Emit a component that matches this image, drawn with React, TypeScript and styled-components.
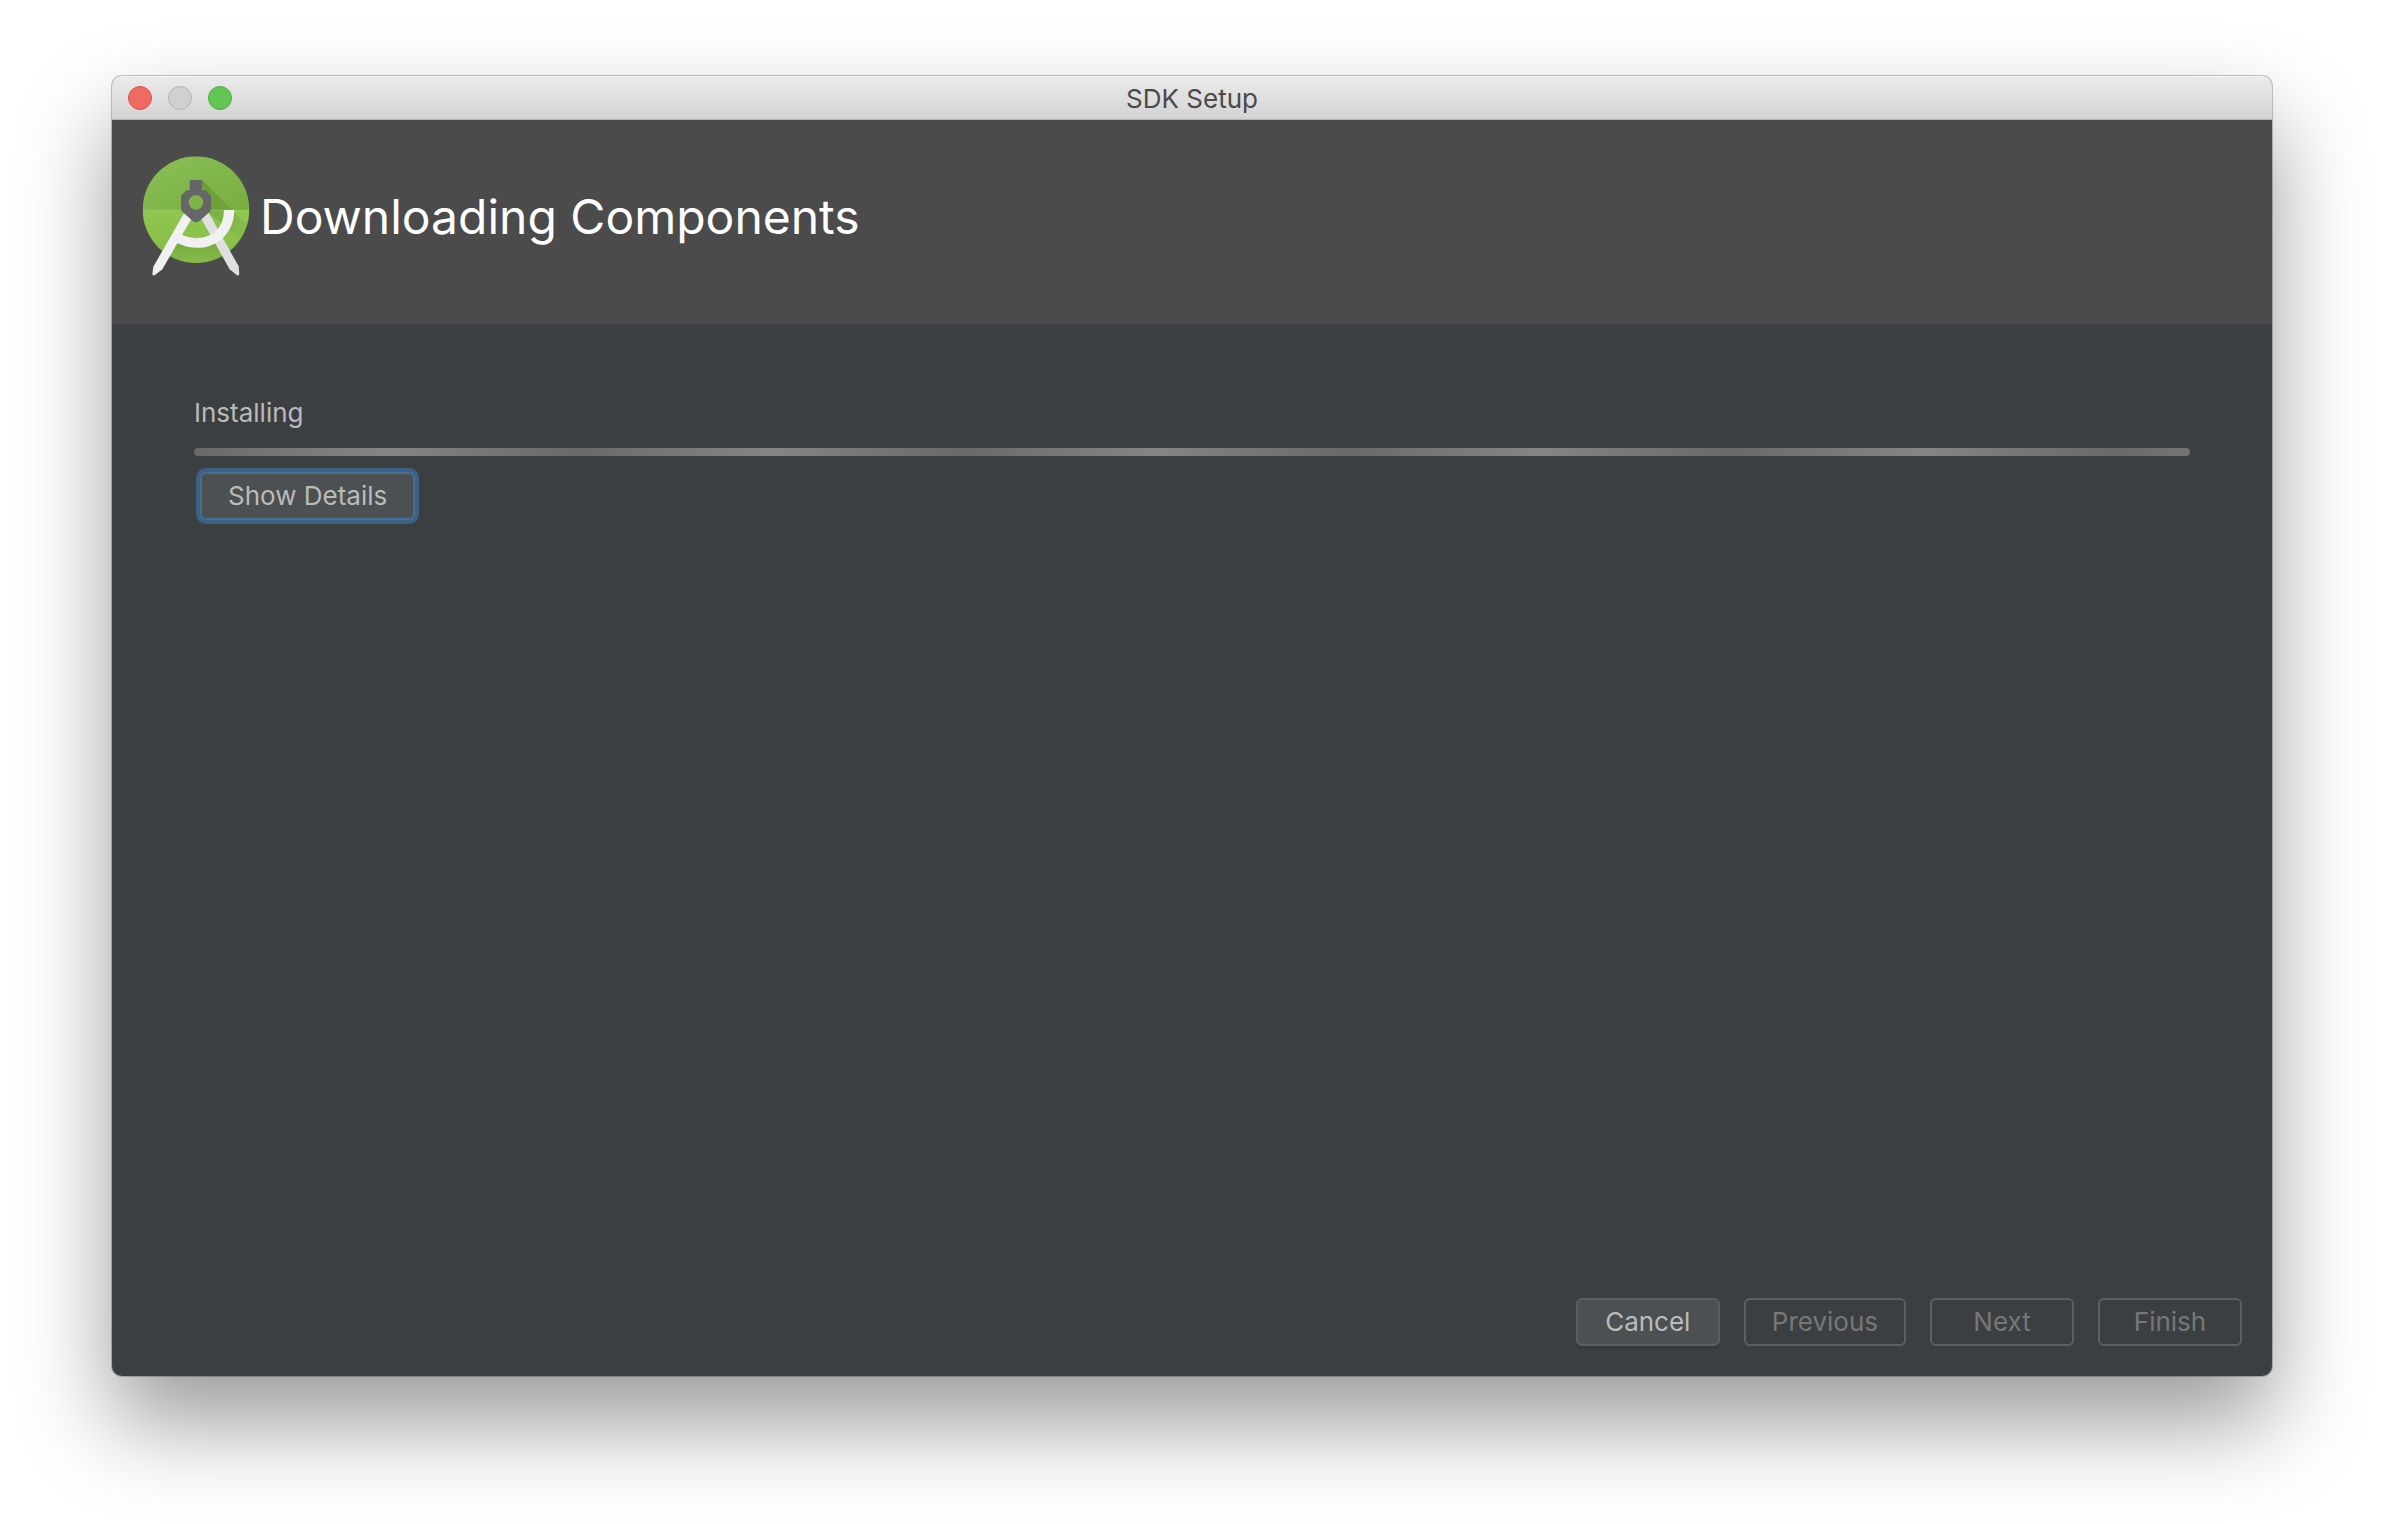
import React from "react";
import styled, { createGlobalStyle, css } from "styled-components";

const GlobalStyle = createGlobalStyle`
  *, *::before, *::after { box-sizing: border-box; }
  body {
    margin: 0;
    background: #ffffff;
    font-family: Inter, "Liberation Sans", sans-serif;
    font-size: 26px;
    line-height: 32px;
  }
`;

const Desktop = styled.div`
  display: flex;
  min-height: 100vh;
  padding: 76px 112px 148px;
`;

const Window = styled.main`
  flex: 1;
  display: flex;
  flex-direction: column;
  min-width: 0;
  border-radius: 10px;
  background: #3c3f41;
  box-shadow: 0 0 0 1px rgba(0, 0, 0, 0.22), 0 46px 92px rgba(0, 0, 0, 0.4);
`;

const TitleBar = styled.header`
  display: grid;
  grid-template-columns: 1fr auto 1fr;
  align-items: center;
  height: 44px;
  padding: 0 16px;
  border-radius: 10px 10px 0 0;
  border-bottom: 1px solid #b4b4b4;
  background: linear-gradient(#ebebeb, #d3d3d3);
  box-shadow: inset 0 1px 0 #f4f4f4;
`;

const TrafficLights = styled.div`
  display: flex;
  gap: 16px;
`;

const Light = styled.button<{ $fill: string; $edge: string }>`
  width: 24px;
  height: 24px;
  padding: 0;
  border: 1px solid ${(p) => p.$edge};
  border-radius: 50%;
  background: ${(p) => p.$fill};
`;

const WindowTitle = styled.span`
  padding-top: 2px;
  color: #4a4a4a;
`;

const Banner = styled.section`
  display: flex;
  align-items: flex-start;
  gap: 8px;
  height: 204px;
  padding: 35px 28px;
  background: #4b4b4b;
`;

const Logo = styled.svg`
  flex: none;
  width: 112px;
  height: 124px;
`;

const Heading = styled.h1`
  margin: 0;
  color: #ffffff;
  font-size: 48px;
  font-weight: 400;
  line-height: 124px;
`;

const Content = styled.section`
  flex: 1;
  display: flex;
  flex-direction: column;
  align-items: flex-start;
  padding: 73px 82px;
`;

const Status = styled.span`
  color: #bbbbbb;
`;

const ProgressTrack = styled.div`
  width: 100%;
  height: 8px;
  margin: 19px 0 12px;
  border-radius: 4px;
  background: repeating-linear-gradient(90deg, #696969 0, #858585 192px, #696969 384px);
`;

const Footer = styled.footer`
  display: flex;
  justify-content: flex-end;
  gap: 24px;
  padding: 30px;
`;

const Button = styled.button<{ $focused?: boolean }>`
  min-width: 144px;
  height: 48px;
  padding: 0 26px;
  border: 2px solid #5e6060;
  border-radius: 6px;
  background: #4c5052;
  box-shadow: 0 3px 0 #36393a;
  color: #bbbbbb;
  font: inherit;
  outline: none;

  &:disabled {
    background: transparent;
    box-shadow: none;
    color: #777777;
  }

  ${(p) =>
    p.$focused &&
    css`
      margin: 4px 6px;
      border-color: #466d94;
      box-shadow: 0 0 0 4px #3d6185;
    `}
`;

function StudioLogo() {
  return (
    <Logo viewBox="30 30 336 372" role="img" aria-label="Android Studio">
      <defs>
        <linearGradient id="upper" x1="0" y1="0" x2="1" y2="1">
          <stop offset="0" stopColor="#8bc058" />
          <stop offset="1" stopColor="#78ad40" />
        </linearGradient>
        <linearGradient id="lower" x1="0" y1="0" x2="0" y2="1">
          <stop offset="0" stopColor="#8fc74f" />
          <stop offset="1" stopColor="#85bb48" />
        </linearGradient>
        <linearGradient id="cast" x1="0" y1="0" x2="1" y2="1">
          <stop offset="0" stopColor="#4d7a20" stopOpacity="0.45" />
          <stop offset="1" stopColor="#4d7a20" stopOpacity="0" />
        </linearGradient>
        <linearGradient id="shade" x1="0" y1="0" x2="0" y2="1">
          <stop offset="0" stopColor="#5f9030" stopOpacity="0.5" />
          <stop offset="1" stopColor="#5f9030" stopOpacity="0" />
        </linearGradient>
        <clipPath id="disc">
          <circle cx="198" cy="194" r="160" />
        </clipPath>
      </defs>
      <g clipPath="url(#disc)">
        <rect x="38" y="34" width="320" height="161" fill="url(#upper)" />
        <rect x="38" y="195" width="320" height="160" fill="url(#lower)" />
        <path d="M217 106L358 246V300L230 200Z" fill="url(#cast)" />
        <path d="M142 292Q200 324 262 292L292 350H112Z" fill="url(#shade)" />
        <rect x="38" y="194" width="320" height="2" fill="#a5cf70" opacity="0.6" />
      </g>
      <path d="M213 220L236 203L326 364L328 388Q326 394 319 389L299 373Z" fill="#e0e0e0" />
      <path d="M282 195H313Q312 250 273 284Q215 328 139 293L150 268Q208 292 252 263Q282 239 282 195Z" fill="#f1f1f1" />
      <path d="M163 203L184 222L97 373L76 389Q69 394 67 388L70 365Z" fill="#f1f1f1" />
      <circle cx="198" cy="282" r="2" fill="#d0d0d0" />
      <path
        fillRule="evenodd"
        d="M179 105H217V136H227L243 152V190Q243 196 238 201L209 228Q198 236 188 228L158 201Q153 196 153 190V152L169 136H179ZM198 150A22 22 0 1 0 198 194A22 22 0 1 0 198 150Z"
        fill="#666666"
      />
    </Logo>
  );
}

export default function App() {
  return (
    <>
      <GlobalStyle />
      <Desktop>
        <Window>
          <TitleBar>
            <TrafficLights>
              <Light type="button" aria-label="Close" $fill="#ed6b60" $edge="#d9554b" />
              <Light type="button" aria-label="Minimize" $fill="#d0d0d0" $edge="#b3b3b3" />
              <Light type="button" aria-label="Zoom" $fill="#61c654" $edge="#4fae43" />
            </TrafficLights>
            <WindowTitle>SDK Setup</WindowTitle>
          </TitleBar>
          <Banner>
            <StudioLogo />
            <Heading>Downloading Components</Heading>
          </Banner>
          <Content>
            <Status id="status">Installing</Status>
            <ProgressTrack role="progressbar" aria-labelledby="status" />
            <Button type="button" $focused>
              Show Details
            </Button>
          </Content>
          <Footer>
            <Button type="button">Cancel</Button>
            <Button type="button" disabled>
              Previous
            </Button>
            <Button type="button" disabled>
              Next
            </Button>
            <Button type="button" disabled>
              Finish
            </Button>
          </Footer>
        </Window>
      </Desktop>
    </>
  );
}
